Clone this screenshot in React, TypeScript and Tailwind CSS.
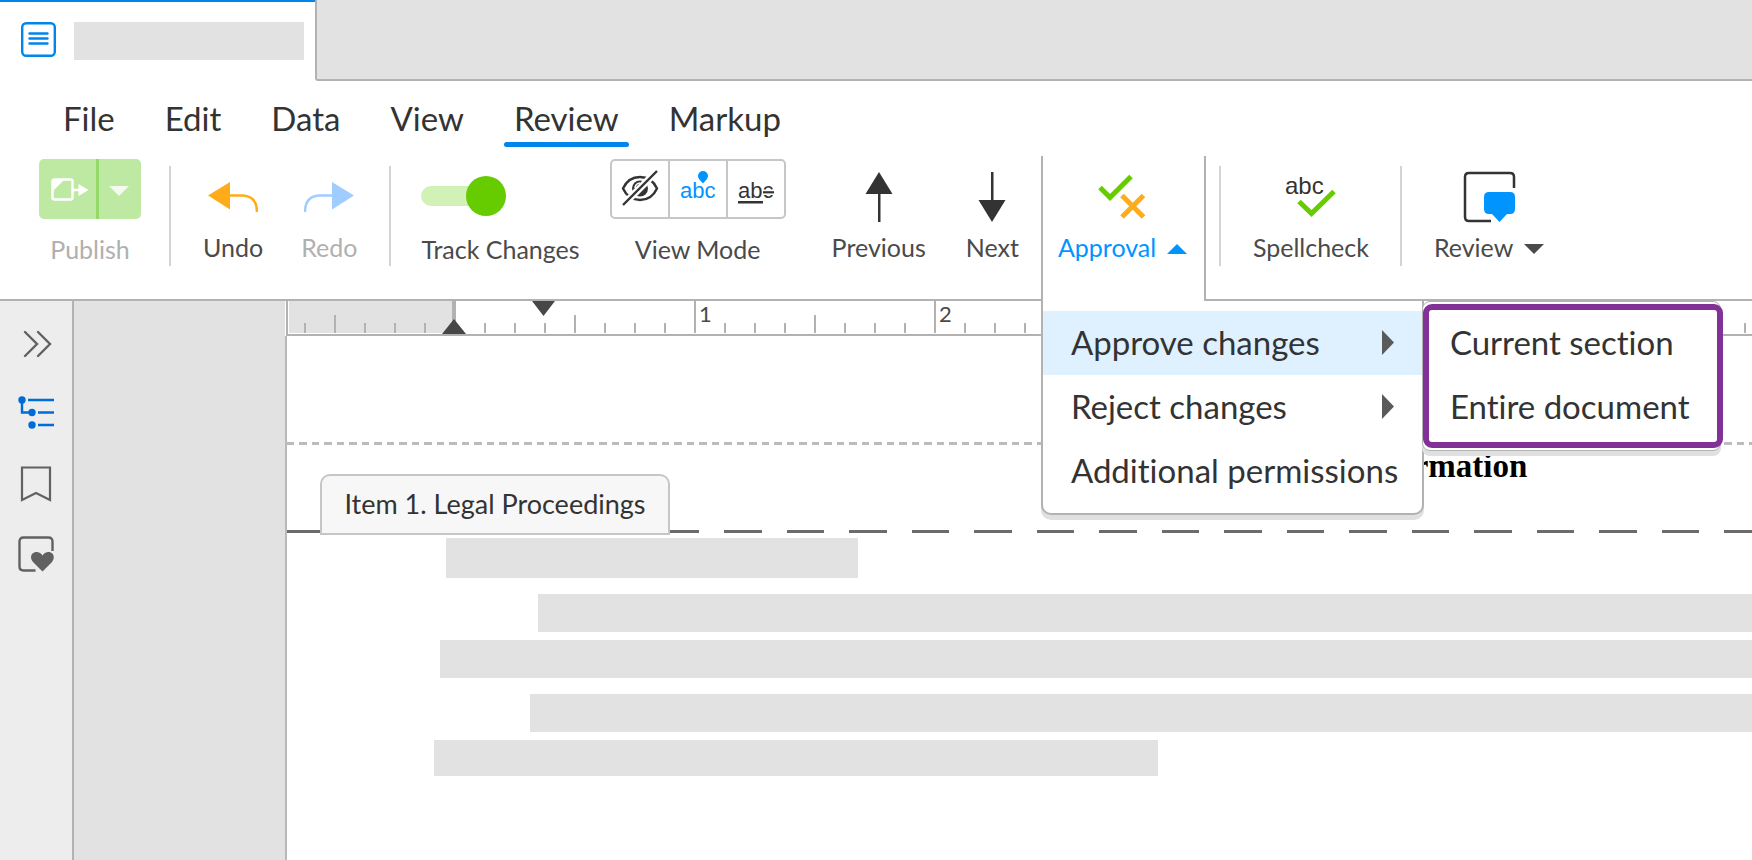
import { useState } from "react";
import type { ReactNode } from "react";

const menus = ["File", "Edit", "Data", "View", "Review", "Markup"];

const sections = [
  { name: "Approve changes", hasSub: true },
  { name: "Reject changes", hasSub: true },
  { name: "Additional permissions", hasSub: false },
];

// one cell per eighth of an inch, zero sits on the sixth cell
const ticks = Array.from({ length: 50 }, (_, i) => i - 5);

function Divider({ className = "" }: { className?: string }) {
  return <div className={`w-[2px] h-[100px] mt-[10px] shrink-0 bg-[#d4d4d4] ${className}`} />;
}

function Tool({
  label,
  icon,
  className = "",
  disabled = false,
}: {
  label: ReactNode;
  icon: ReactNode;
  className?: string;
  disabled?: boolean;
}) {
  return (
    <button
      disabled={disabled}
      className={`flex flex-col items-center shrink-0 pt-[3px] ${disabled ? "text-[#b0b0b0]" : "text-[#4a4a4a]"} ${className}`}
    >
      <span className="h-[60px] flex items-center">{icon}</span>
      <span className="mt-[12px] flex items-center leading-8 whitespace-nowrap">{label}</span>
    </button>
  );
}

function TabBar() {
  return (
    <div className="flex h-[81px]">
      <div className="w-[315px] shrink-0 flex items-start gap-[18px] pl-[21px] pt-[20px] bg-white border-t-2 border-[#0085ea]">
        <svg width="35" height="35" viewBox="0 0 35 35" fill="none" stroke="#0085ea" strokeWidth="2.400">
          <rect x="1.200" y="1.200" width="32.600" height="32.600" rx="4" />
          <path d="M8.500 11.500h18M8.500 16.500h18M8.500 21.500h18" strokeLinecap="round" />
        </svg>
        <div className="w-[230px] h-[38px] bg-[#e2e2e2]" />
      </div>
      <div className="flex-1 bg-[#e2e2e2] border-l-2 border-b-2 border-[#b2b2b2] rounded-bl-[3px]" />
    </div>
  );
}

function MenuBar() {
  const [active, setActive] = useState("Review");
  return (
    <nav className="flex h-[75px] pl-[53px] pt-[8px] gap-[30px] text-[33px] leading-[44px] text-[#333]">
      {menus.map((m) => (
        <button key={m} onClick={() => setActive(m)} className="h-[58px] px-[10px] relative">
          {m}
          {active === m && (
            <span className="absolute left-0 right-0 bottom-0 h-[5px] rounded-full bg-[#0085ea]" />
          )}
        </button>
      ))}
    </nav>
  );
}

function ViewModes() {
  return (
    <div className="flex h-[60px] border-2 border-[#c6c6c6] rounded-[5px] divide-x-2 divide-[#c6c6c6]">
      <button aria-label="Hide changes">
        <svg width="56" height="56" viewBox="0 0 56 56" fill="none">
          <path
            d="M11 27.500C14 21 20 16 28 16s14 5 17 11.500C42 34 36 39 28 39S14 34 11 27.500z"
            stroke="#333"
            strokeWidth="2.400"
            strokeLinejoin="round"
          />
          <circle cx="28" cy="27.500" r="8" fill="#333" />
          <path d="M23 27a5 5 0 0 1 5-5" stroke="#fff" strokeWidth="1.500" />
          <path d="M11 44L45 10" stroke="#fff" strokeWidth="7" />
          <path d="M11 44L45 10" stroke="#333" strokeWidth="2.400" />
        </svg>
      </button>
      <button aria-label="Show changes inline">
        <svg width="56" height="56" viewBox="0 0 56 56" fill="#0094ff">
          <text x="10" y="37" fontSize="22" fontFamily="Liberation Sans, sans-serif">
            abc
          </text>
          <path d="M33 10a5 5 0 0 1 5 5c0 3-3 5-5 7.500c-2-2.500-5-4.500-5-7.500a5 5 0 0 1 5-5z" />
        </svg>
      </button>
      <button aria-label="Show redline">
        <svg width="56" height="56" viewBox="0 0 56 56" fill="#333">
          <text x="10" y="37" fontSize="22" fontFamily="Liberation Sans, sans-serif">
            abc
          </text>
          <path d="M10 40h25v2.500H10z" />
          <path d="M34.500 28.500h12v5.500h-12z" fill="#fff" />
          <path d="M35 30.200h11v2.200H35z" />
        </svg>
      </button>
    </div>
  );
}

function MenuItem({
  name,
  hasSub = false,
  className = "px-[28px]",
}: {
  name: string;
  hasSub?: boolean;
  className?: string;
}) {
  return (
    <button
      className={`flex w-full h-[64px] items-center justify-between pb-[2px] whitespace-nowrap text-left ${className}`}
    >
      {name}
      {hasSub && (
        <svg width="12" height="25" viewBox="0 0 12 25" fill="#5a5a5a">
          <path d="M0 0l12 12.500L0 25z" />
        </svg>
      )}
    </button>
  );
}

function ApprovalMenu() {
  return (
    <div className="absolute top-full left-0 z-20 -ml-[2px] w-[383px] h-[214px] pt-[10px] bg-white border-2 border-t-0 border-[#b2b2b2] rounded-b-[10px] shadow-[0_5px_0_#e0e0e0] text-[33px] leading-[40px] text-[#333]">
      {sections.map((s, i) => (
        <MenuItem
          key={s.name}
          name={s.name}
          hasSub={s.hasSub}
          className={i === 0 ? "px-[28px] bg-[#dff1ff]" : "px-[28px]"}
        />
      ))}
      <div className="absolute top-0 left-full w-[299px] h-[150px] pt-[2px] bg-white border border-[#b2b2b2] rounded-[8px] shadow-[0_5px_0_#e0e0e0]">
        <div className="w-[300px] h-[144px] pt-px border-6 border-[#823196] rounded-[9px]">
          <MenuItem name="Current section" className="px-[21px]" />
          <MenuItem name="Entire document" className="px-[21px]" />
        </div>
      </div>
    </div>
  );
}

function Toolbar() {
  const [tracking, setTracking] = useState(true);
  return (
    <div className="flex h-[145px] pl-[39px] text-[25px] border-b-2 border-[#b2b2b2]">
      <div className="flex flex-col items-center shrink-0 w-[102px] pt-[3px] text-[#b0b0b0]">
        <div className="flex w-full h-[60px] rounded-[5px] overflow-hidden bg-[#bde9a2]">
          <button aria-label="Publish" disabled className="w-[57px] pl-[4px] pt-[2px] flex items-center justify-center">
            <svg width="38" height="24" viewBox="0 0 38 24" fill="none" stroke="#fff" strokeWidth="2.500">
              <rect x="1.500" y="1.500" width="20" height="20" rx="2" />
              <path d="M2 2h11L2 13z" fill="#fff" stroke="none" />
              <path d="M22 12h6" />
              <path d="M27.500 6l10 6l-10 6z" fill="#fff" stroke="none" />
            </svg>
          </button>
          <button aria-label="Publish options" disabled className="flex-1 pt-[4px] pr-[2px] flex items-center justify-center border-l-3 border-[#95d968]">
            <svg width="20" height="10" viewBox="0 0 20 10" fill="#f3fbee">
              <path d="M0 0h20L10 10z" />
            </svg>
          </button>
        </div>
        <span className="mt-[14px] leading-8">Publish</span>
      </div>
      <Divider className="ml-[28px]" />
      <Tool
        label="Undo"
        className="ml-[32px]"
        icon={
          <svg width="50" height="60" viewBox="0 0 50 60" fill="none">
            <path d="M22 36.500h13q14 1 14 16.500" stroke="#ffac1a" strokeWidth="2.500" />
            <path d="M0 36.500L22 23v27.500z" fill="#ffac1a" />
          </svg>
        }
      />
      <Tool
        label="Redo"
        disabled
        className="ml-[38px]"
        icon={
          <svg width="50" height="60" viewBox="0 0 50 60" fill="none">
            <path d="M28 36.500H15Q1 37.500 1 53" stroke="#a0cdff" strokeWidth="2.500" />
            <path d="M50 36.500L28 23v27.500z" fill="#a0cdff" />
          </svg>
        }
      />
      <Divider className="ml-[32px]" />
      <label className="flex flex-col shrink-0 ml-[30px] pt-[3px] text-[#4a4a4a] whitespace-nowrap">
        <span className="flex items-center h-[60px] pt-[14px]">
          <input
            type="checkbox"
            className="sr-only"
            checked={tracking}
            onChange={() => setTracking(!tracking)}
          />
          <span className="flex items-center w-[85px] h-[40px]">
            <span className="w-[65px] h-[20px] rounded-l-full bg-[#d2f1b6]" />
            <span className="w-[40px] h-[40px] -ml-[20px] rounded-full shrink-0 bg-[#66cc00]" />
          </span>
        </span>
        <span className="mt-[14px] leading-8">Track Changes</span>
      </label>
      <div className="flex flex-col items-center shrink-0 ml-[30px] pt-[3px] text-[#4a4a4a]">
        <ViewModes />
        <span className="mt-[14px] leading-8">View Mode</span>
      </div>
      <Tool
        label="Previous"
        className="ml-[46px]"
        icon={
          <svg className="overflow-visible" width="28" height="60" viewBox="0 0 28 60" fill="#333">
            <path d="M14 13l13.500 22h-27z" />
            <path d="M13 34h2.500v29H13z" />
          </svg>
        }
      />
      <Tool
        label="Next"
        className="ml-[40px]"
        icon={
          <svg className="overflow-visible" width="28" height="60" viewBox="0 0 28 60" fill="#333">
            <path d="M14 63L.5 41h27z" />
            <path d="M13 13h2.500v29H13z" />
          </svg>
        }
      />
      <div className="relative flex shrink-0 ml-[22px] w-[165px] h-[145px] bg-white border-x-2 border-[#b2b2b2] z-10">
        <button aria-expanded className="flex flex-col pl-[15px] pt-[3px] text-[#0094ff]">
          <svg className="ml-[39px]" width="50" height="60" viewBox="0 0 50 60" fill="none">
            <path d="M3 28.500L13 38.500L34 17.500" stroke="#66cc00" strokeWidth="5" />
            <path d="M25 58l21.500-21.500M25 36.500L46.500 58" stroke="#ffac1a" strokeWidth="5" />
          </svg>
          <span className="mt-[12px] flex items-center gap-[11px] leading-8">
            Approval
            <svg className="mt-[4px]" width="20" height="10" viewBox="0 0 20 10" fill="currentColor">
              <path d="M0 10h20L10 0z" />
            </svg>
          </span>
        </button>
        <ApprovalMenu />
      </div>
      <Divider className="ml-[13px]" />
      <Tool
        label="Spellcheck"
        className="ml-[32px]"
        icon={
          <svg width="52" height="60" viewBox="0 0 52 60" fill="none">
            <text x="0" y="35" fontSize="24" fill="#333" fontFamily="Liberation Sans, sans-serif">
              abc
            </text>
            <path d="M14 42.500L26.500 54.500L49 32.500" stroke="#66cc00" strokeWidth="5" />
          </svg>
        }
      />
      <Divider className="ml-[31px]" />
      <Tool
        className="ml-[32px]"
        icon={
          <svg className="overflow-visible" width="51" height="60" viewBox="0 0 51 60" fill="none">
            <path d="M50 29V18q0-4-4-4H5q-4 0-4 4v40q0 4 4 4h22" stroke="#333" strokeWidth="2.500" />
            <path d="M25 33h21q5 0 5 5v12q0 5-5 5h-3l-7.500 8l-7.500-8h-3q-5 0-5-5V38q0-5 5-5z" fill="#0094ff" />
          </svg>
        }
        label={
          <>
            Review
            <svg className="ml-[11px] mt-[4px]" width="20" height="10" viewBox="0 0 20 10" fill="currentColor">
              <path d="M0 0h20L10 10z" />
            </svg>
          </>
        }
      />
    </div>
  );
}

function Sidebar() {
  return (
    <aside className="w-[74px] shrink-0 flex flex-col pl-[18px] pt-[25px] gap-[34px] bg-[#ededed] border-r-2 border-[#b2b2b2]">
      <button aria-label="Expand panel">
        <svg width="36" height="36" viewBox="0 0 36 36" fill="none" stroke="#616161" strokeWidth="2.400" strokeLinecap="round">
          <path d="M7 6l12 12L7 30M20 6l12 12L20 30" />
        </svg>
      </button>
      <button aria-label="Outline">
        <svg width="36" height="36" viewBox="0 0 36 36" fill="none" stroke="#006cd8" strokeWidth="2.400">
          <path d="M10 4h26M20 16.500h16M20 29h16M4 4v12.500h10" />
          <g fill="#006cd8" stroke="none">
            <circle cx="4" cy="4" r="3.700" />
            <circle cx="14" cy="16.500" r="3.700" />
            <circle cx="14" cy="29" r="3.700" />
          </g>
        </svg>
      </button>
      <button aria-label="Bookmarks">
        <svg width="36" height="36" viewBox="0 0 36 36" fill="none" stroke="#616161" strokeWidth="2.200">
          <path d="M4 1.500h28V34l-14-7l-14 7z" />
        </svg>
      </button>
      <button aria-label="Favorites">
        <svg width="36" height="36" viewBox="0 0 36 36" fill="none">
          <path d="M34.500 15V5.500q0-4-4-4H5.500q-4 0-4 4v25q0 4 4 4h12" stroke="#616161" strokeWidth="2.400" />
          <path d="M24.500 35.500L15 26C11 21.500 13.500 16 18.500 16q4 0 6 3.500q2-3.500 6-3.500c5 0 7 5.500 3.500 10z" fill="#616161" />
        </svg>
      </button>
    </aside>
  );
}

function Ruler() {
  return (
    <div className="relative flex h-[35px] ml-px shrink-0 items-end overflow-hidden bg-white border-b-2 border-l-2 border-[#b2b2b2] text-[22px] leading-[26px] text-[#4a4a4a]">
      <div className="absolute left-px top-0 w-[167px] h-[32px] bg-[#e2e2e2] border-r-4 border-[#b2b2b2]" />
      <div className="flex items-end h-full relative pl-[16px] pb-px">
        {ticks.map((t) => (
          <div key={t} className="flex items-end w-[30px] h-full shrink-0">
            <span
              className={`w-[2px] shrink-0 bg-[#b2b2b2] ${t % 8 === 0 ? "h-full" : t % 4 === 0 ? "h-[18px]" : "h-[10px]"}`}
            />
            {t > 0 && t % 8 === 0 && <span className="self-start pl-[3px]">{t / 8}</span>}
          </div>
        ))}
      </div>
      <svg className="absolute left-[154px] bottom-0" width="24" height="15" viewBox="0 0 24 15" fill="#474747">
        <path d="M0 15h24L12 0z" />
      </svg>
      <svg className="absolute left-[244px] top-0" width="23" height="15" viewBox="0 0 23 15" fill="#474747">
        <path d="M0 0h23L11.500 15z" />
      </svg>
    </div>
  );
}

function Page() {
  return (
    <div className="flex-1 bg-white border-l-2 border-[#b9b9b9] overflow-hidden">
      <div className="mt-[106px] h-[3px] bg-[repeating-linear-gradient(90deg,#bbb_0_7px,transparent_7px_12px,#bbb_12px_20px,transparent_20px_25px)]" />
      <h1 className="h-[85px] pl-[1068px] pt-[3px] font-['Liberation_Serif',serif] font-bold text-[33px] leading-[36px] text-black">
        Information
      </h1>
      <div className="h-[3px] bg-[repeating-linear-gradient(90deg,#6b6b6b_0_37px,transparent_37px_62px,#6b6b6b_62px_100px,transparent_100px_125px)]" />
      <h2 className="relative -mt-[59px] ml-[33px] w-[350px] h-[61px] flex items-center justify-center bg-[#f7f7f7] border-2 border-[#c6c6c6] rounded-t-[10px] text-[27px] text-[#333] whitespace-nowrap">
        Item 1. Legal Proceedings
      </h2>
      <div className="mt-[3px] ml-[159px] w-[412px] h-[40px] bg-[#e2e2e2]" />
      <div className="mt-[16px] ml-[251px] h-[38px] bg-[#e2e2e2]" />
      <div className="mt-[8px] ml-[153px] h-[38px] bg-[#e2e2e2]" />
      <div className="mt-[16px] ml-[243px] h-[38px] bg-[#e2e2e2]" />
      <div className="mt-[8px] ml-[147px] w-[724px] h-[36px] bg-[#e2e2e2]" />
    </div>
  );
}

export default function App() {
  return (
    <div className="min-h-screen flex flex-col overflow-hidden bg-white font-[Lato,sans-serif] [font-variant-ligatures:none]">
      <header>
        <TabBar />
        <MenuBar />
        <Toolbar />
      </header>
      <main className="flex flex-1 min-w-0">
        <Sidebar />
        <div className="w-[211px] shrink-0 bg-[#e2e2e2]" />
        <div className="flex flex-col flex-1 min-w-0">
          <Ruler />
          <Page />
        </div>
      </main>
    </div>
  );
}
